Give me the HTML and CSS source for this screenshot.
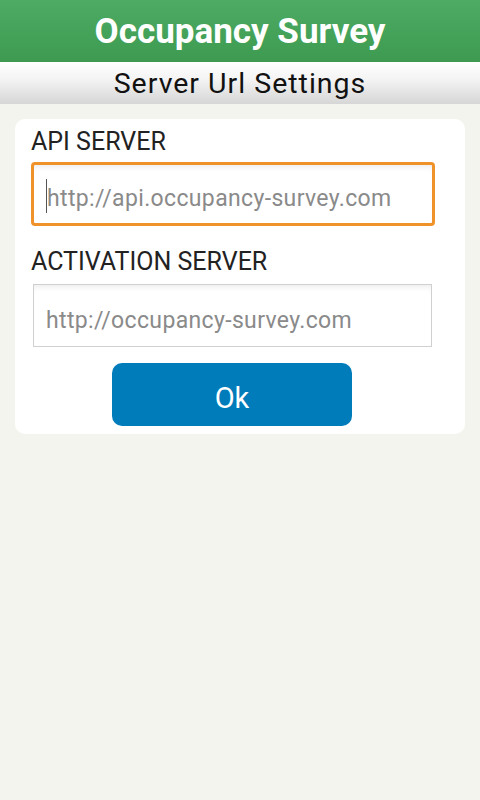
FILE: index.html
```html
<!DOCTYPE html>
<html lang="en">
<head>
    <meta charset="UTF-8">
    <meta name="viewport" content="width=device-width, initial-scale=1.0">
    <title>Occupancy Survey</title>
    <link rel="stylesheet" href="styles.css">
</head>
<body>
    <div class="app-bar">Occupancy Survey</div>
    <div class="sub-bar">Server Url Settings</div>

    <div class="card">
        <label class="field-label">API SERVER</label>
        <div class="field focused">
            <span class="caret"></span>
            <span class="placeholder">http://api.occupancy-survey.com</span>
        </div>

        <label class="field-label">ACTIVATION SERVER</label>
        <div class="field plain">
            <span class="placeholder">http://occupancy-survey.com</span>
        </div>

        <div class="actions">
            <button class="ok-button">Ok</button>
        </div>
    </div>
</body>
</html>
```

FILE: styles.css
```css
body {
    margin: 0;
    background-color: #f4f4ef;
    font-family: Roboto, "Noto Sans", sans-serif;
}
.app-bar {
    height: 62px;
    line-height: 64px;
    background: linear-gradient(#4eab64, #3d9a50);
    color: white;
    font-size: 35px;
    font-weight: bold;
    text-align: center;
}
.sub-bar {
    height: 42px;
    line-height: 44px;
    background: linear-gradient(#ffffff, #f4f4f4 40%, #d6d6d6);
    color: #111;
    font-size: 28.5px;
    letter-spacing: 1px;
    text-align: center;
}
.card {
    margin: 15px 15px 0;
    padding: 6px 16px 8px;
    background-color: white;
    border-radius: 10px;
}
.field-label {
    display: block;
    padding-top: 2px;
    font-size: 25px;
    color: #222;
    line-height: 30px;
}
.field {
    display: flex;
    align-items: center;
    box-sizing: border-box;
    padding-top: 9px;
    font-size: 23px;
    letter-spacing: 0.35px;
}
.field.focused {
    width: 404px;
    height: 64px;
    margin: 5px 0 19px;
    padding-left: 12px;
    border: 3px solid #f0922a;
    border-radius: 4px;
    box-shadow: inset 0 6px 6px -4px rgba(0,0,0,0.08);
}
.field.plain {
    width: 399px;
    height: 63px;
    margin: 7px 0 0 2px;
    padding-left: 12px;
    border: 1px solid #d0d0d0;
    box-shadow: inset 0 6px 6px -4px rgba(0,0,0,0.08);
}
.caret {
    width: 1px;
    height: 34px;
    margin-top: -6px;
    background-color: #555;
}
.placeholder {
    color: #8a8a8a;
}
.actions {
    display: flex;
    justify-content: center;
    margin-top: 16px;
}
.ok-button {
    width: 240px;
    height: 63px;
    margin-left: -16px;
    padding-top: 7px;
    border: none;
    border-radius: 10px;
    background-color: #007cbb;
    color: white;
    font-family: Roboto, "Noto Sans", sans-serif;
    font-size: 29px;
}
```
